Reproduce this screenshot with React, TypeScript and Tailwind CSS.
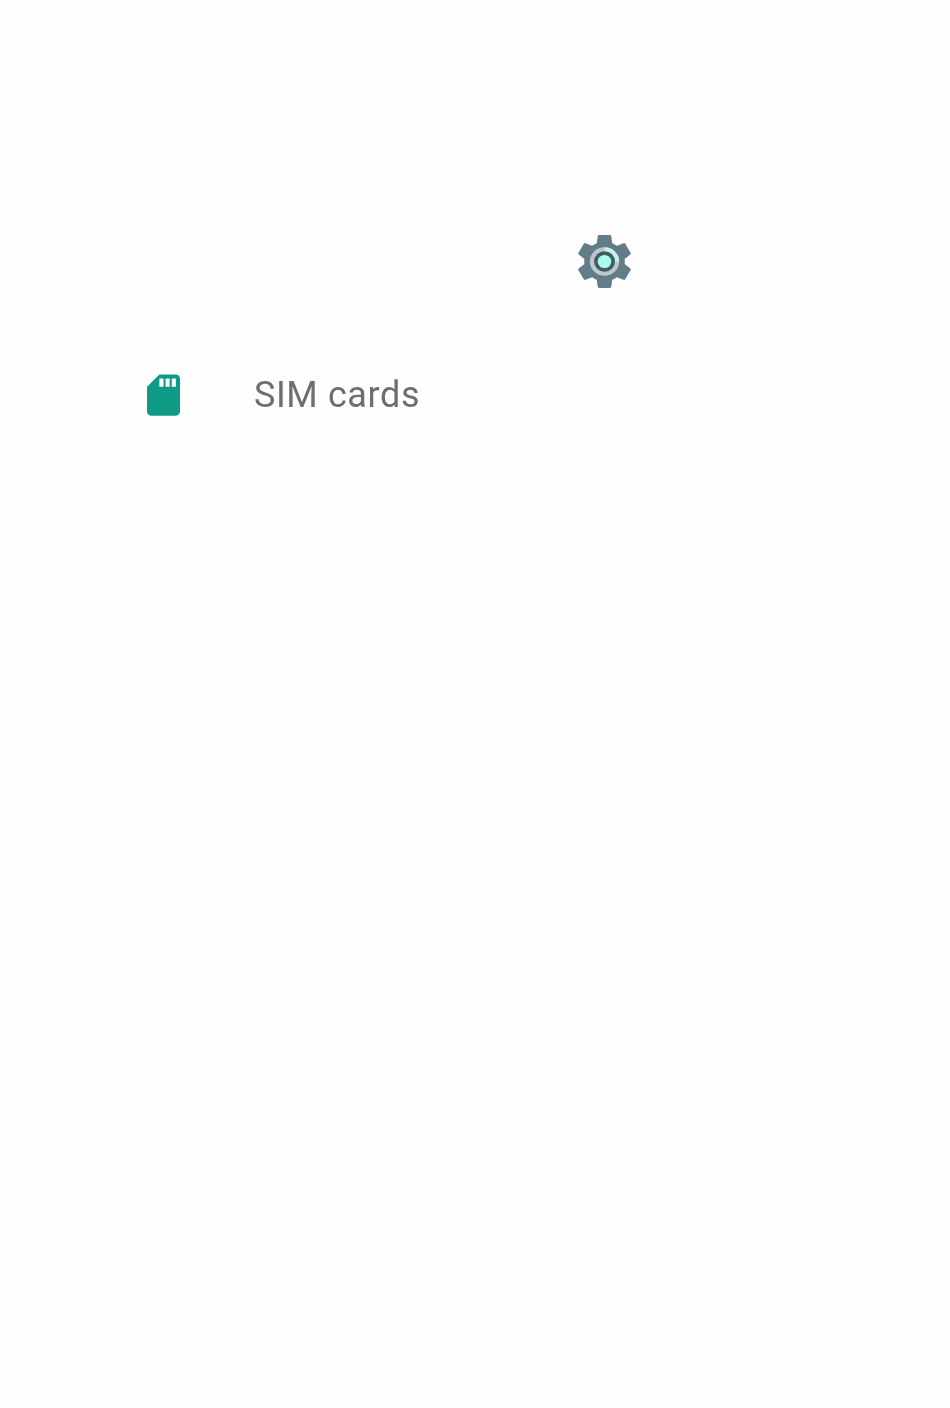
export default function App() {
  return (
    <div className="min-h-[1408px] w-full bg-[#fefefe] pt-[234px] font-['Roboto',sans-serif]">
      <div className="flex pl-[578px]">
        <svg viewBox="2.6 2 18.8 20" preserveAspectRatio="none" className="block h-[55px] w-[53px] blur-[0.5px]">
          <path fill="#627c89" d="M19.14 12.94c.04-.3.06-.61.06-.94 0-.32-.02-.64-.07-.94l2.03-1.58c.18-.14.23-.41.12-.61l-1.92-3.32c-.12-.22-.37-.29-.59-.22l-2.39.96c-.5-.38-1.03-.7-1.62-.94l-.36-2.54c-.04-.24-.24-.41-.48-.41h-3.84c-.24 0-.43.17-.47.41l-.36 2.54c-.59.24-1.13.57-1.62.94l-2.39-.96c-.22-.08-.47 0-.59.22L2.74 8.87c-.12.21-.08.47.12.61l2.03 1.58c-.05.3-.09.63-.09.94s.02.64.07.94l-2.03 1.58c-.18.14-.23.41-.12.61l1.92 3.32c.12.22.37.29.59.22l2.39-.96c.5.38 1.03.7 1.62.94l.36 2.54c.05.24.24.41.48.41h3.84c.24 0 .44-.17.47-.41l.36-2.54c.59-.24 1.13-.56 1.62-.94l2.39.96c.22.08.47 0 .59-.22l1.92-3.32c.12-.22.07-.47-.12-.61l-2.01-1.58z" />
          <circle cx="12" cy="12" r="5.2" fill="#bcc8cd" />
          <path fill="#c6f2ec" d="M12 6.8a5.2 5.2 0 0 1 5.2 5.2h-1.5a3.7 3.7 0 0 0-3.7-3.7z" />
          <circle cx="12" cy="12" r="3.7" fill="#455a64" />
          <circle cx="12" cy="12" r="2.4" fill="#a7ffeb" />
        </svg>
      </div>
      <div className="mt-[85px] flex items-center pl-[147px]">
        <svg viewBox="4 2 16 20" className="block h-[42px] w-[33px] blur-[0.4px]">
          <path fill="#0e9a85" d="M18 2h-8L4.02 8 4 20c0 1.1.9 2 2 2h12c1.1 0 2-.9 2-2V4c0-1.1-.9-2-2-2zm-6 6h-2V4h2v4zm3 0h-2V4h2v4zm3 0h-2V4h2v4z" />
        </svg>
        <span className="ml-[74px] text-[36px] leading-[42px] tracking-[0.6px] text-[#6e6e6e] blur-[0.5px]">SIM cards</span>
      </div>
    </div>
  );
}
